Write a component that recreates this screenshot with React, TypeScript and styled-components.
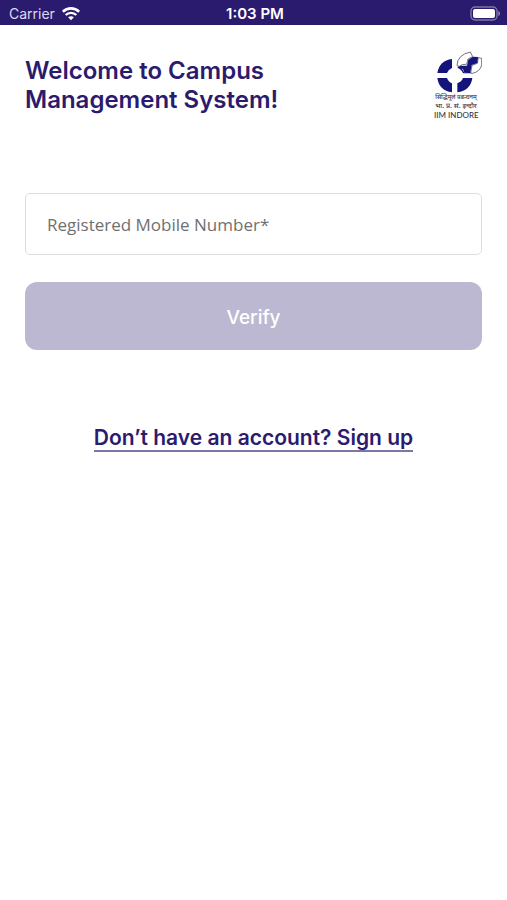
import React, { useState } from "react";
import styled, { createGlobalStyle } from "styled-components";

const navy = "#2b1b6e";

const GlobalStyle = createGlobalStyle`
  *, *::before, *::after { box-sizing: border-box; }
  body {
    margin: 0;
    background: #ffffff;
    color: ${navy};
    font-family: Inter, "Liberation Sans", sans-serif;
  }
`;

const StatusBar = styled.header`
  display: grid;
  grid-template-columns: 1fr auto 1fr;
  align-items: center;
  height: 25px;
  padding: 2px 6px 0 9px;
  background: ${navy};
  color: #ffffff;
  font-size: 14px;
  line-height: 20px;
`;

const Carrier = styled.div`
  display: flex;
  align-items: center;
  gap: 7px;
  color: #dedaea;
`;

const Clock = styled.time`
  font-size: 15px;
  font-weight: 600;
`;

const BatteryIcon = styled.svg`
  justify-self: end;
`;

const Page = styled.main`
  display: flex;
  flex-direction: column;
  padding: 26px 25px 0;
`;

const Intro = styled.div`
  display: flex;
  justify-content: space-between;
  align-items: flex-start;
`;

const Title = styled.h1`
  max-width: 300px;
  margin: 5px 0 0;
  font-size: 24px;
  font-weight: 600;
  line-height: 29px;
`;

const Logo = styled.div`
  display: flex;
  flex-direction: column;
  align-items: flex-start;
  width: 48px;
  color: #33333f;
`;

const EmblemIcon = styled.svg`
  align-self: flex-end;
`;

const LogoLine = styled.span<{ $size: number; $latin?: boolean }>`
  width: 44px;
  text-align: center;
  white-space: nowrap;
  font-family: ${(p) =>
    p.$latin ? "Lato" : '"Noto Sans Devanagari", "Noto Sans"'}, sans-serif;
  font-size: ${(p) => p.$size}px;
  font-weight: 500;
  line-height: 9px;
`;

const Form = styled.form`
  display: flex;
  flex-direction: column;
  gap: 27px;
  margin-top: 73px;
`;

const PhoneInput = styled.input`
  width: 100%;
  height: 62px;
  padding: 0 21px;
  border: 1px solid #dddddd;
  border-radius: 5px;
  background: #ffffff;
  color: #333333;
  font-family: "Open Sans", sans-serif;
  font-size: 17px;

  &::placeholder {
    color: #707070;
    opacity: 1;
  }
`;

const VerifyButton = styled.button`
  height: 68px;
  padding: 2px 0 0;
  border: 0;
  border-radius: 12px;
  background: #bdb8d1;
  color: #ffffff;
  font-family: inherit;
  font-size: 19px;
  font-weight: 500;
`;

const SignUpLink = styled.a`
  align-self: center;
  margin-top: 75px;
  border-bottom: 2px solid #7f76a8;
  color: ${navy};
  font-size: 21px;
  font-weight: 600;
  line-height: 25px;
  text-decoration: none;
`;

function Wifi() {
  return (
    <svg width="18" height="14" viewBox="0 0 18 14" fill="none" stroke="#fff" aria-hidden="true">
      <path d="M.8 4.7C5.5.3 12.5.3 17.2 4.7" strokeWidth="2.6" />
      <path d="M3.7 8c3-2.9 7.6-2.9 10.6 0" strokeWidth="2.4" />
      <path d="M6.1 10.3c1.7-1.5 4.1-1.5 5.8 0L9 13.3z" fill="#fff" stroke="none" />
    </svg>
  );
}

function Battery() {
  return (
    <BatteryIcon width="31" height="15" viewBox="0 0 31 15" role="img" aria-label="Battery full">
      <rect x="1" y="1" width="26" height="13" rx="4" fill="none" stroke="#7f75a9" strokeWidth="1.4" />
      <rect x="3" y="3" width="22" height="9" rx="2" fill="#fff" />
      <path d="M28.3 5c2.4.8 2.4 4.2 0 5z" fill="#8d84b3" />
    </BatteryIcon>
  );
}

function Emblem() {
  return (
    <EmblemIcon width="46" height="42" viewBox="50 34 138 126" aria-hidden="true">
      <g fill="#14147a">
        <path d="M98 58V85Q87 89 83 100H54Q60 63 98 58Z" />
        <path d="M54 115H83Q87 127 98 131V158Q59 152 54 115Z" />
        <path d="M114 131Q127 126 131 115H159Q154 152 114 158Z" />
        <path d="M114 84L122 76L134 98L159 96V101H131Q127 89 114 84Z" />
      </g>
      <path
        d="M113 78Q113 46 153 37L160 51L146 58L142 74Q128 72 120 80Z"
        fill="#fff"
        stroke="#55556a"
        strokeWidth="2.5"
      />
      <path
        d="M154 100L158 77L174 71L177 54L187 56V76Q182 96 160 101Z"
        fill="#fff"
        stroke="#55556a"
        strokeWidth="2.5"
      />
      <path
        d="M120 84L124 78L143 78L147 60L161 51L176 52L174 70L157 76L153 98H134L131 88Z"
        fill="#14147a"
      />
    </EmblemIcon>
  );
}

export default function App() {
  const [phone, setPhone] = useState("");
  return (
    <>
      <GlobalStyle />
      <StatusBar>
        <Carrier>
          Carrier
          <Wifi />
        </Carrier>
        <Clock>1:03 PM</Clock>
        <Battery />
      </StatusBar>
      <Page>
        <Intro>
          <Title>Welcome to Campus Management System!</Title>
          <Logo>
            <Emblem />
            <LogoLine $size={6}>सिद्धिमूलं प्रबन्धनम्</LogoLine>
            <LogoLine $size={7}>भा. प्र. सं. इन्दौर</LogoLine>
            <LogoLine $size={8} $latin>IIM INDORE</LogoLine>
          </Logo>
        </Intro>
        <Form onSubmit={(e) => e.preventDefault()}>
          <PhoneInput
            type="tel"
            aria-label="Registered Mobile Number"
            placeholder="Registered Mobile Number*"
            value={phone}
            onChange={(e) => setPhone(e.target.value)}
          />
          <VerifyButton type="submit">Verify</VerifyButton>
        </Form>
        <SignUpLink href="#signup">Don’t have an account? Sign up</SignUpLink>
      </Page>
    </>
  );
}
